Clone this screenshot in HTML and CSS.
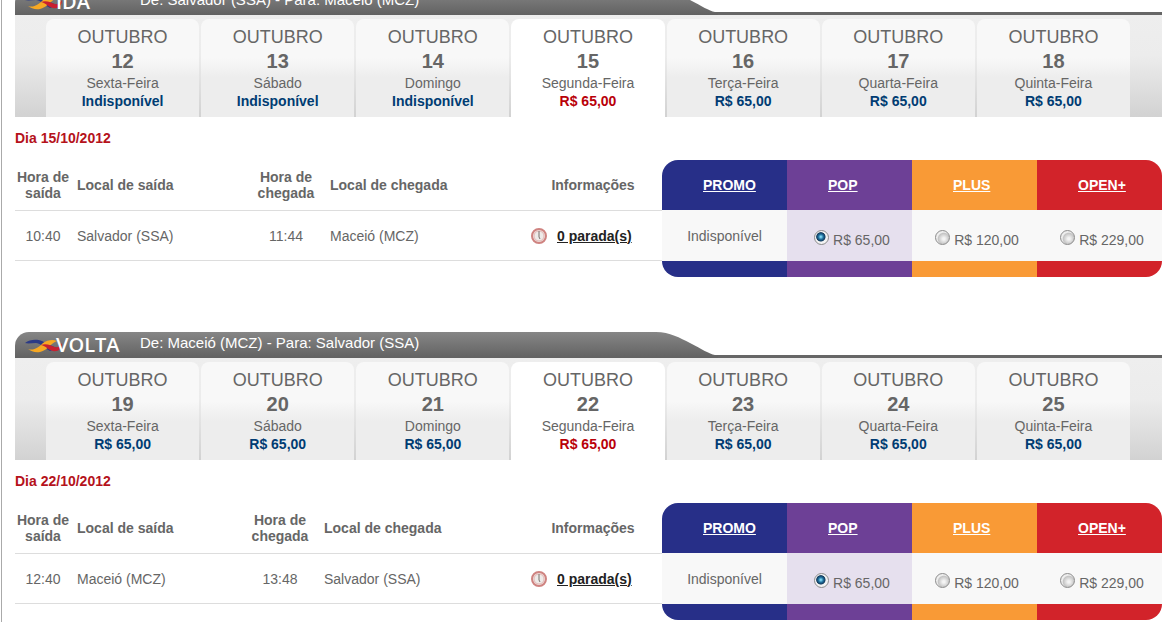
FILE: index.html
```html
<!DOCTYPE html>
<html lang="pt-BR">
<head>
<meta charset="UTF-8">
<meta name="viewport" content="width=device-width, initial-scale=1.0">
<title>Selecione seus voos</title>
<link rel="stylesheet" href="styles.css">
</head>
<body>
<!-- Shared drawings -->
<svg class="defs" width="0" height="0">
    <symbol id="wing" viewBox="0 0 37 14">
        <path d="M0 4C5 0 12 0 17 2C23 5 28 8 33 9L25 12C19 9 17 5 11 4C7 4 3 5 0 4Z" fill="#2b3a86"/>
        <path d="M3 10C9 12 14 8 18 4C22 1 28 0 32 2C26 4 23 11 15 13C10 14 6 12 3 10Z" fill="#f7a823"/>
        <path d="M16 6C22 4 26 7 30 8C33 9 35 7 37 4C37 10 33 13 28 12C23 11 21 7 16 6Z" fill="#c8202f"/>
    </symbol>
    <symbol id="clock" viewBox="0 0 16 16">
        <circle cx="8" cy="8" r="7" fill="#f0e6e4" stroke="#cf8380" stroke-width="2"/>
        <circle cx="8" cy="8" r="5" fill="#eeeae8" stroke="#e3b8b5"/>
        <path d="M8 3V9L9 11" fill="none" stroke="#77706c" stroke-width="1"/>
    </symbol>
    <symbol id="curve" viewBox="0 0 62 26">
        <path d="M0 0C14 0 24 6 34 11C46 17 53 22 59 23H62V26H0Z" fill="url(#bar)"/>
    </symbol>
    <linearGradient id="bar" x1="0" y1="0" x2="0" y2="1">
        <stop offset="0" stop-color="#868686"/>
        <stop offset="1" stop-color="#626262"/>
    </linearGradient>
</svg>

<main class="page">
    <!-- Ida -->
    <section class="trip">
        <header class="trip-header">
            <div class="trip-title">
                <svg class="wing"><use href="#wing"/></svg>
                <h2>IDA</h2>
                <p>De: Salvador (SSA) - Para: Maceió (MCZ)</p>
            </div>
            <svg class="curve"><use href="#curve"/></svg>
        </header>
        <nav class="days">
            <a href="#"><span class="month">OUTUBRO</span><span class="day">12</span><span>Sexta-Feira</span><strong>Indisponível</strong></a>
            <a href="#"><span class="month">OUTUBRO</span><span class="day">13</span><span>Sábado</span><strong>Indisponível</strong></a>
            <a href="#"><span class="month">OUTUBRO</span><span class="day">14</span><span>Domingo</span><strong>Indisponível</strong></a>
            <a href="#" class="active"><span class="month">OUTUBRO</span><span class="day">15</span><span>Segunda-Feira</span><strong>R$ 65,00</strong></a>
            <a href="#"><span class="month">OUTUBRO</span><span class="day">16</span><span>Terça-Feira</span><strong>R$ 65,00</strong></a>
            <a href="#"><span class="month">OUTUBRO</span><span class="day">17</span><span>Quarta-Feira</span><strong>R$ 65,00</strong></a>
            <a href="#"><span class="month">OUTUBRO</span><span class="day">18</span><span>Quinta-Feira</span><strong>R$ 65,00</strong></a>
        </nav>
        <h3>Dia 15/10/2012</h3>
        <table class="flights">
            <colgroup>
                <col class="col-departure"><col class="col-from"><col class="col-arrival"><col><col class="col-info">
                <col class="col-fare"><col class="col-fare"><col class="col-fare"><col class="col-fare">
            </colgroup>
            <thead>
                <tr>
                    <th>Hora de saída</th>
                    <th class="place">Local de saída</th>
                    <th>Hora de chegada</th>
                    <th class="place">Local de chegada</th>
                    <th>Informações</th>
                    <th class="fare promo"><a href="#">PROMO</a></th>
                    <th class="fare pop"><a href="#">POP</a></th>
                    <th class="fare plus"><a href="#">PLUS</a></th>
                    <th class="fare open"><a href="#">OPEN+</a></th>
                </tr>
            </thead>
            <tbody>
                <tr>
                    <td>10:40</td>
                    <td class="place">Salvador (SSA)</td>
                    <td>11:44</td>
                    <td class="place">Maceió (MCZ)</td>
                    <td><div class="stops"><svg class="clock"><use href="#clock"/></svg><a href="#">0 parada(s)</a></div></td>
                    <td class="price sold-out">Indisponível</td>
                    <td class="price selected"><input type="radio" name="ida" id="ida-pop" checked> <label for="ida-pop">R$ 65,00</label></td>
                    <td class="price"><input type="radio" name="ida" id="ida-plus"> <label for="ida-plus">R$ 120,00</label></td>
                    <td class="price"><input type="radio" name="ida" id="ida-open"> <label for="ida-open">R$ 229,00</label></td>
                </tr>
            </tbody>
            <tfoot>
                <tr>
                    <td colspan="5"></td>
                    <td class="promo"></td>
                    <td class="pop"></td>
                    <td class="plus"></td>
                    <td class="open"></td>
                </tr>
            </tfoot>
        </table>
    </section>

    <!-- Volta -->
    <section class="trip return">
        <header class="trip-header">
            <div class="trip-title">
                <svg class="wing"><use href="#wing"/></svg>
                <h2>VOLTA</h2>
                <p>De: Maceió (MCZ) - Para: Salvador (SSA)</p>
            </div>
            <svg class="curve"><use href="#curve"/></svg>
        </header>
        <nav class="days">
            <a href="#"><span class="month">OUTUBRO</span><span class="day">19</span><span>Sexta-Feira</span><strong>R$ 65,00</strong></a>
            <a href="#"><span class="month">OUTUBRO</span><span class="day">20</span><span>Sábado</span><strong>R$ 65,00</strong></a>
            <a href="#"><span class="month">OUTUBRO</span><span class="day">21</span><span>Domingo</span><strong>R$ 65,00</strong></a>
            <a href="#" class="active"><span class="month">OUTUBRO</span><span class="day">22</span><span>Segunda-Feira</span><strong>R$ 65,00</strong></a>
            <a href="#"><span class="month">OUTUBRO</span><span class="day">23</span><span>Terça-Feira</span><strong>R$ 65,00</strong></a>
            <a href="#"><span class="month">OUTUBRO</span><span class="day">24</span><span>Quarta-Feira</span><strong>R$ 65,00</strong></a>
            <a href="#"><span class="month">OUTUBRO</span><span class="day">25</span><span>Quinta-Feira</span><strong>R$ 65,00</strong></a>
        </nav>
        <h3>Dia 22/10/2012</h3>
        <table class="flights">
            <colgroup>
                <col class="col-departure"><col class="col-from"><col class="col-arrival"><col><col class="col-info">
                <col class="col-fare"><col class="col-fare"><col class="col-fare"><col class="col-fare">
            </colgroup>
            <thead>
                <tr>
                    <th>Hora de saída</th>
                    <th class="place">Local de saída</th>
                    <th>Hora de chegada</th>
                    <th class="place">Local de chegada</th>
                    <th>Informações</th>
                    <th class="fare promo"><a href="#">PROMO</a></th>
                    <th class="fare pop"><a href="#">POP</a></th>
                    <th class="fare plus"><a href="#">PLUS</a></th>
                    <th class="fare open"><a href="#">OPEN+</a></th>
                </tr>
            </thead>
            <tbody>
                <tr>
                    <td>12:40</td>
                    <td class="place">Maceió (MCZ)</td>
                    <td>13:48</td>
                    <td class="place">Salvador (SSA)</td>
                    <td><div class="stops"><svg class="clock"><use href="#clock"/></svg><a href="#">0 parada(s)</a></div></td>
                    <td class="price sold-out">Indisponível</td>
                    <td class="price selected"><input type="radio" name="volta" id="volta-pop" checked> <label for="volta-pop">R$ 65,00</label></td>
                    <td class="price"><input type="radio" name="volta" id="volta-plus"> <label for="volta-plus">R$ 120,00</label></td>
                    <td class="price"><input type="radio" name="volta" id="volta-open"> <label for="volta-open">R$ 229,00</label></td>
                </tr>
            </tbody>
            <tfoot>
                <tr>
                    <td colspan="5"></td>
                    <td class="promo"></td>
                    <td class="pop"></td>
                    <td class="plus"></td>
                    <td class="open"></td>
                </tr>
            </tfoot>
        </table>
    </section>
</main>
</body>
</html>
```
FILE: styles.css
```css
body {
    margin: 0;
    background-color: #fff;
    color: #666;
    font-family: "Liberation Sans", Arial, sans-serif;
    font-size: 14px;
    line-height: 16px;
}
.defs {
    position: absolute;
}
h2, h3, p {
    margin: 0;
}
.page {
    display: flow-root;
    margin-left: 1px;
    padding: 0 10px 2px 13px;
    border-left: 1px solid #aaa;
}
.trip {
    margin-top: -11px;
}
.trip.return {
    margin-top: 55px;
}

/* Title bar */
.trip-header {
    display: flex;
    height: 26px;
    background: linear-gradient(#666, #666) bottom / 100% 3px no-repeat;
}
.trip-title {
    display: flex;
    flex: 0 0 56%;
    height: 26px;
    border-radius: 14px 0 0 0;
    background: linear-gradient(#868686, #626262);
    color: #fff;
}
.wing {
    width: 37px;
    height: 14px;
    margin: 7px 0 0 10px;
}
.trip-title h2 {
    width: 78px;
    margin-left: -6px;
    font: 600 20px/26px "Open Sans", sans-serif;
}
.trip-title p {
    margin-left: 6px;
    font-size: 15px;
    line-height: 22px;
}
.curve {
    width: 62px;
    height: 26px;
    margin-left: -1px;
}

/* Day tabs */
.days {
    display: grid;
    grid-template-columns: repeat(7, 1fr);
    gap: 2px;
    padding: 4px 32px 0 31px;
    background: linear-gradient(#eee, #ececec 40%, #d2d2d2);
}
.days a {
    display: flex;
    flex-direction: column;
    align-items: center;
    height: 98px;
    border-radius: 8px 8px 0 0;
    background: linear-gradient(#f8f8f8 40%, #ededed 60%);
    color: #666;
    line-height: 18px;
    text-decoration: none;
}
.days .month {
    padding-top: 6px;
    font-size: 18px;
    line-height: 24px;
}
.days .day {
    font-size: 20px;
    font-weight: bold;
    line-height: 25px;
}
.days strong {
    color: #003c73;
}
.days a.active {
    background: #fff;
}
.days .active strong {
    color: #b90009;
}
.trip h3 {
    color: #b5121b;
    font-size: 14px;
    line-height: 43px;
}

/* Flights */
.flights {
    width: 100%;
    table-layout: fixed;
    border-spacing: 0;
    text-align: center;
}
.col-departure {
    width: 56px;
}
.col-from {
    width: 177px;
}
.return .col-from {
    width: 171px;
}
.col-arrival {
    width: 76px;
}
.col-info {
    width: 138px;
}
.col-fare {
    width: 125px;
}
.flights th, .flights td {
    padding: 0;
}
.flights th {
    height: 50px;
}
.flights .place {
    padding-left: 6px;
    text-align: left;
}
.flights .fare {
    padding-left: 41px;
    text-align: left;
}
.fare a {
    color: #fff;
}
.flights tbody td {
    height: 49px;
    border-top: 1px solid #ddd;
    border-bottom: 1px solid #ddd;
}
.flights tbody .price {
    height: 43px;
    padding: 6px 0 0 5px;
    border-color: #f8f8f8;
    background-color: #f8f8f8;
}
.flights tbody .sold-out {
    height: 49px;
    padding: 0;
}
.flights tbody .selected {
    border-color: #e6e0ee;
    background-color: #e6e0ee;
}
.flights tfoot td {
    height: 16px;
}
.promo {
    background-color: #272f88;
}
.pop {
    background-color: #6d4096;
}
.plus {
    background-color: #f99a36;
}
.open {
    background-color: #d2232a;
}
thead .promo {
    border-top-left-radius: 16px;
}
thead .open {
    border-top-right-radius: 16px;
}
tfoot .promo {
    border-bottom-left-radius: 16px;
}
tfoot .open {
    border-bottom-right-radius: 16px;
}
.stops {
    display: flex;
    align-items: center;
    gap: 10px;
    padding-left: 7px;
}
.stops a {
    color: #222;
    font-weight: bold;
}
.clock {
    width: 16px;
    height: 16px;
}
.price input {
    appearance: none;
    width: 15px;
    height: 15px;
    margin: 0;
    border: 1px solid #8b8b8b;
    border-radius: 50%;
    background: radial-gradient(circle at 60% 60%, #f4f4f4 10%, #c4c4c4 50%, #eee 60%);
    vertical-align: baseline;
}
.price input:checked {
    background: radial-gradient(circle at 45% 45%, #7fd8f4 5%, #1f6f9c 25%, #123a5c 42%, #f2f2f2 50%);
}
```
